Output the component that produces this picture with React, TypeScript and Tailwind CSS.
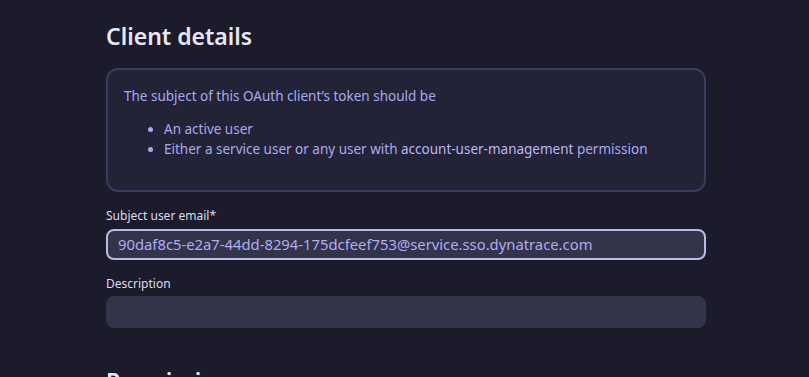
import React from 'react';

const App: React.FC = () => {
    return (
        <div className="h-[377px] w-full bg-[#1b1b2c] overflow-hidden" style={{ fontFamily: '"Noto Sans", "Open Sans", sans-serif' }}>
            <div className="w-[600px] ml-[106px] pt-[20px]">
                <h2 className="text-[23px] leading-[32px] font-semibold text-[#e6e6f5]">Client details</h2>

                <div className="mt-[16px] rounded-[12px] border-2 border-[#3b3a5c] bg-[#232338] px-[16px] pt-[16px] pb-[31px] text-[13.5px] text-[#aaa8ee]">
                    <p className="leading-[20px]">The subject of this OAuth client’s token should be</p>
                    <ul className="mt-[13px] ml-[40px] list-disc">
                        <li className="leading-[20px]">An active user</li>
                        <li className="leading-[20px]">
                            Either a service user or any user with <span className="text-[#b9b7f4]">account-user-management</span> permission
                        </li>
                    </ul>
                </div>

                <div className="mt-[15px]">
                    <label className="block text-[12px] leading-[18px] text-[#dcdcea]">Subject user email*</label>
                    <div className="mt-[4px] h-[31px] rounded-[8px] border-2 border-[#bcbae4] bg-[#33334a] px-[10px] flex items-center text-[14.8px] text-[#aeacf4]">
                        90daf8c5-e2a7-44dd-8294-175dcfeef753@service.sso.dynatrace.com
                    </div>
                </div>

                <div className="mt-[15px]">
                    <label className="block text-[12px] leading-[18px] text-[#dcdcea]">Description</label>
                    <div className="mt-[3px] h-[32px] rounded-[8px] bg-[#33334a]" />
                </div>

                <h2 className="mt-[37px] text-[23px] leading-[32px] font-semibold text-[#e6e6f5]">Permissions</h2>
            </div>
        </div>
    );
};

export default App;
